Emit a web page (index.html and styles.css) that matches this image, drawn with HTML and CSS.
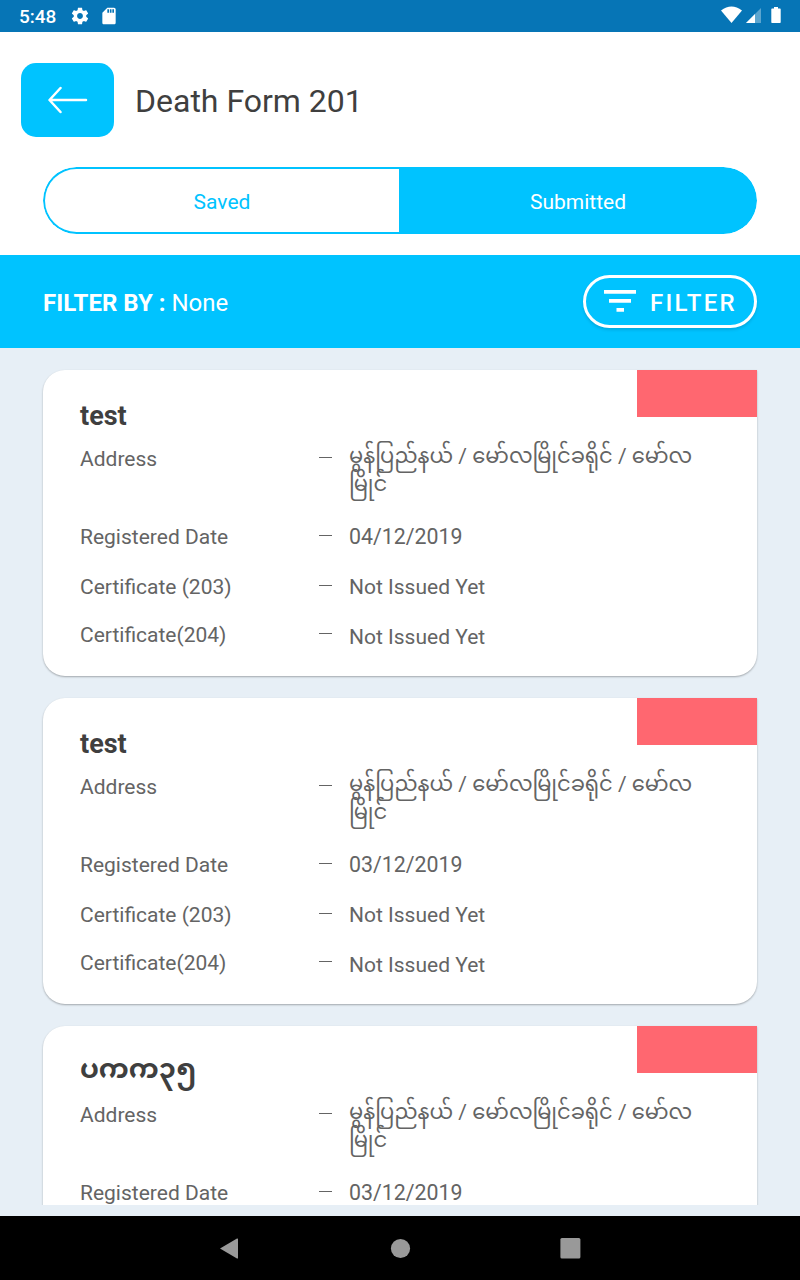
FILE: index.html
```html
<!DOCTYPE html>
<html lang="en">
<head>
<meta charset="utf-8">
<title>Death Form 201</title>
<link rel="stylesheet" href="styles.css">
</head>
<body>
<div class="screen">
  <div class="status">
    <span class="time">5:48</span>
    <svg class="gear" width="20" height="20" viewBox="0 0 24 24"><path fill="#fff" d="M19.43 12.98c.04-.32.07-.64.07-.98s-.03-.66-.07-.98l2.11-1.65c.19-.15.24-.42.12-.64l-2-3.46c-.12-.22-.39-.3-.61-.22l-2.49 1c-.52-.4-1.08-.73-1.69-.98l-.38-2.65C14.46 2.18 14.25 2 14 2h-4c-.25 0-.46.18-.49.42l-.38 2.65c-.61.25-1.17.59-1.69.98l-2.49-1c-.23-.09-.49 0-.61.22l-2 3.46c-.13.22-.07.49.12.64l2.11 1.65c-.04.32-.07.65-.07.98s.03.66.07.98l-2.11 1.65c-.19.15-.24.42-.12.64l2 3.46c.12.22.39.3.61.22l2.49-1c.52.4 1.08.73 1.69.98l.38 2.65c.03.24.24.42.49.42h4c.25 0 .46-.18.49-.42l.38-2.65c.61-.25 1.17-.59 1.69-.98l2.49 1c.23.09.49 0 .61-.22l2-3.46c.12-.22.07-.49-.12-.64l-2.11-1.65zM12 15.500c-1.930 0-3.500-1.570-3.500-3.500s1.570-3.500 3.500-3.500 3.500 1.570 3.500 3.500-1.570 3.500-3.500 3.500z"/></svg>
    <svg class="sd" width="20" height="20" viewBox="0 0 24 24"><path fill="#fff" d="M18 2h-8L4.020 8 4 20c0 1.100.9 2 2 2h12c1.100 0 2-.9 2-2V4c0-1.100-.9-2-2-2zm-6 6h-2V4h2v4zm3 0h-2V4h2v4zm3 0h-2V4h2v4z"/></svg>
    <svg class="signals" width="64" height="20" viewBox="0 0 64 20"><path fill="#fff" d="M0 4.500Q10.500-3.500 21 4.500L10.500 17Z"/><path fill="#fff" fill-opacity=".35" d="M25 17 40 2V17Z"/><path fill="#fff" d="M25 17 34 8V17Z"/><path fill="#fff" d="M53 1h4v1.500h2q.7 0 .7.700V16.300q0 .7-.7.700h-8q-.7 0-.7-.700V3.200q0-.7.7-.700h2z"/></svg>
  </div>
  <div class="header">
    <div class="back"><svg width="40" height="28" viewBox="0 0 40 28"><path fill="none" stroke="#fff" stroke-width="2.500" stroke-linecap="round" stroke-linejoin="round" d="M12.500 2 1.500 14 12.500 26M2 14H38"/></svg></div>
    <div class="heading">Death Form 201</div>
  </div>
  <div class="tabs"><div class="tab">Saved</div><div class="tab active">Submitted</div></div>
  <div class="filterbar">
    <div class="by"><b>FILTER BY :</b> None</div>
    <div class="filter"><svg width="32" height="22" viewBox="0 0 32 22"><path fill="#fff" d="M0 0H32V3.700H0ZM5 9H27V12.700H5ZM12.500 18H20V21.700H12.500Z"/></svg><span>FILTER</span></div>
  </div>
  <div class="list">
    <div class="card">
      <div class="top"><div class="name">test</div><div class="flag"></div></div>
      <div class="row address"><span>Address</span><i class="dash"></i><span class="my">မွန်ပြည်နယ် / မော်လမြိုင်ခရိုင် / မော်လ<br>မြိုင်</span></div>
      <div class="row date"><span>Registered Date</span><i class="dash"></i><span class="digits">04/12/2019</span></div>
      <div class="row cert"><span>Certificate (203)</span><i class="dash"></i><span>Not Issued Yet</span></div>
      <div class="row last"><span>Certificate(204)</span><i class="dash"></i><span class="value">Not Issued Yet</span></div>
    </div>
    <div class="card">
      <div class="top"><div class="name">test</div><div class="flag"></div></div>
      <div class="row address"><span>Address</span><i class="dash"></i><span class="my">မွန်ပြည်နယ် / မော်လမြိုင်ခရိုင် / မော်လ<br>မြိုင်</span></div>
      <div class="row date"><span>Registered Date</span><i class="dash"></i><span class="digits">03/12/2019</span></div>
      <div class="row cert"><span>Certificate (203)</span><i class="dash"></i><span>Not Issued Yet</span></div>
      <div class="row last"><span>Certificate(204)</span><i class="dash"></i><span class="value">Not Issued Yet</span></div>
    </div>
    <div class="card">
      <div class="top"><div class="name mm">ပကက၃၅</div><div class="flag"></div></div>
      <div class="row address"><span>Address</span><i class="dash"></i><span class="my">မွန်ပြည်နယ် / မော်လမြိုင်ခရိုင် / မော်လ<br>မြိုင်</span></div>
      <div class="row date"><span>Registered Date</span><i class="dash"></i><span class="digits">03/12/2019</span></div>
    </div>
  </div>
  <div class="nav">
    <svg width="22" height="22" viewBox="0 0 22 22"><path fill="#999" d="M1 11.500 18 1.500Q19 1.100 19 2V21Q19 21.900 18 21.500Z"/></svg>
    <svg width="22" height="22" viewBox="0 0 22 22"><circle cx="11.500" cy="11.500" r="9.600" fill="#999"/></svg>
    <svg width="22" height="22" viewBox="0 0 22 22"><rect x="1.400" y="1.100" width="20" height="20.500" rx="1.500" fill="#999"/></svg>
  </div>
</div>
</body>
</html>
```
FILE: styles.css
```css
* { box-sizing: border-box; }
body { margin: 0; background: #fff; font-family: Roboto, "Noto Sans Myanmar", "Noto Sans", sans-serif; }
svg { display: block; flex: none; }
.screen { width: 800px; height: 1280px; display: flex; flex-direction: column; overflow: hidden; }
.status { height: 32px; flex: none; display: flex; align-items: center; background: #0675b6; padding: 0 19px; color: #fff; }
.time { font-size: 19px; font-weight: 500; line-height: 32px; width: 51px; white-space: nowrap; padding-top: 1px; }
.sd { margin-left: 9px; }
.signals { margin-left: auto; margin-right: -4px; }
.header { height: 135px; flex: none; display: flex; align-items: center; padding-left: 21px; gap: 21px; }
.back { width: 93px; height: 74px; border-radius: 15px; background: #00c3ff; display: flex; align-items: center; justify-content: center; }
.heading { font-size: 32px; color: #3f3f3f; white-space: nowrap; padding-top: 2px; }
.tabs { height: 67px; flex: none; margin: 0 43px 21px; border-radius: 34px; display: flex; overflow: hidden; }
.tab { width: 356px; border: 2px solid #00c3ff; border-right: 0; border-radius: 34px 0 0 34px; display: flex; align-items: center; justify-content: center; font-size: 21px; color: #00c3ff; padding-top: 2px; }
.tab.active { width: 358px; border: 0; border-radius: 0 34px 34px 0; background: #00c3ff; color: #fff; }
.filterbar { height: 93px; flex: none; display: flex; align-items: center; justify-content: space-between; padding: 0 43px; background: #00c3ff; color: #fff; }
.by { font-size: 24px; padding-top: 2px; }
.filter { width: 174px; height: 53px; border: 3px solid #fff; border-radius: 27px; display: flex; align-items: center; gap: 14px; padding-left: 18px; font-size: 24px; font-weight: 500; letter-spacing: 2.25px; background: #00c3ff; box-shadow: 0 2px 3px rgba(0,70,100,.2); }
.filter svg { margin-top: -2px; }
.filter span { margin-top: 2px; }
.list { height: 857px; flex: none; background: #e7eff6; padding: 22px 43px 0; display: flex; flex-direction: column; gap: 22px; overflow: hidden; }
.card { height: 306px; flex: none; background: #fff; border-radius: 22px 0 22px 22px; box-shadow: 0 1px 2px rgba(0,0,0,.3); padding-left: 37px; color: #646464; font-size: 21px; }
.top { height: 76px; display: flex; justify-content: space-between; align-items: flex-start; }
.name { font-size: 27px; line-height: 32px; padding-top: 30px; font-weight: 700; color: #3f3f3f; }
.name.mm { padding-top: 27px; }
.flag { width: 120px; height: 47px; background: #ff6770; }
.row { display: grid; grid-template-columns: 239px 30px 1fr; line-height: 26px; white-space: nowrap; }
.dash { width: 13px; height: 1px; background: #646464; margin-top: 11px; }
.address { height: 78px; }
.date { height: 50px; }
.cert { height: 48px; }
.digits { font-size: 21.33px; }
.value { padding-top: 2px; }
.my { line-height: 28px; margin-top: -4px; }
.nav { height: 75px; flex: none; background: #000; border-top: 11px solid #e7eff6; display: flex; justify-content: center; align-items: center; gap: 148px; }
```
